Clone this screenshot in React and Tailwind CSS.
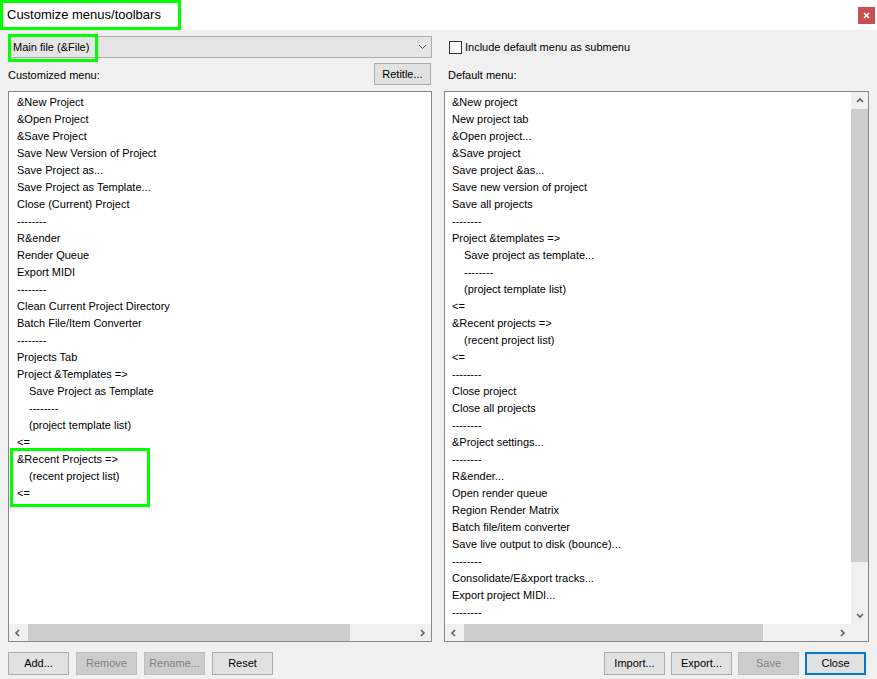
import { useState } from 'react'

const leftItems = [
  ['&New Project', 0],
  ['&Open Project', 0],
  ['&Save Project', 0],
  ['Save New Version of Project', 0],
  ['Save Project as...', 0],
  ['Save Project as Template...', 0],
  ['Close (Current) Project', 0],
  ['--------', 0],
  ['R&ender', 0],
  ['Render Queue', 0],
  ['Export MIDI', 0],
  ['--------', 0],
  ['Clean Current Project Directory', 0],
  ['Batch File/Item Converter', 0],
  ['--------', 0],
  ['Projects Tab', 0],
  ['Project &Templates =>', 0],
  ['Save Project as Template', 1],
  ['--------', 1],
  ['(project template list)', 1],
  ['<=', 0],
]

const recentItems = [
  ['&Recent Projects =>', 0],
  ['(recent project list)', 1],
  ['<=', 0],
]

const rightItems = [
  ['&New project', 0],
  ['New project tab', 0],
  ['&Open project...', 0],
  ['&Save project', 0],
  ['Save project &as...', 0],
  ['Save new version of project', 0],
  ['Save all projects', 0],
  ['--------', 0],
  ['Project &templates =>', 0],
  ['Save project as template...', 1],
  ['--------', 1],
  ['(project template list)', 1],
  ['<=', 0],
  ['&Recent projects =>', 0],
  ['(recent project list)', 1],
  ['<=', 0],
  ['--------', 0],
  ['Close project', 0],
  ['Close all projects', 0],
  ['--------', 0],
  ['&Project settings...', 0],
  ['--------', 0],
  ['R&ender...', 0],
  ['Open render queue', 0],
  ['Region Render Matrix', 0],
  ['Batch file/item converter', 0],
  ['Save live output to disk (bounce)...', 0],
  ['--------', 0],
  ['Consolidate/E&xport tracks...', 0],
  ['Export project MIDI...', 0],
  ['--------', 0],
]

const Row = ({ text, indent }) => (
  <div className={`h-[17px] leading-[17px] whitespace-nowrap ${indent ? 'pl-[12px]' : ''}`}>
    {text}
  </div>
)

const Chevron = ({ dir }) => {
  const paths = {
    left: 'M5 1 L2 4 L5 7',
    right: 'M2 1 L5 4 L2 7',
    up: 'M1 5 L4 2 L7 5',
    down: 'M1 2 L4 5 L7 2',
  }
  return (
    <svg width="8" height="8" viewBox="0 0 8 8">
      <path d={paths[dir]} fill="none" stroke="#606060" strokeWidth="1.6" />
    </svg>
  )
}

const HScroll = ({ thumbLeft, thumbWidth }) => (
  <div className="h-[17px] flex items-stretch bg-[#f0f0f0] shrink-0">
    <div className="w-[17px] flex items-center justify-center">
      <Chevron dir="left" />
    </div>
    <div className="flex-1 relative">
      <div
        className="absolute top-0 bottom-0 bg-[#cdcdcd]"
        style={{ left: thumbLeft, width: thumbWidth }}
      />
    </div>
    <div className="w-[17px] flex items-center justify-center">
      <Chevron dir="right" />
    </div>
  </div>
)

const Btn = ({ children, disabled, primary, className = '' }) => (
  <button
    className={`h-[23px] w-[61px] text-[11px] ${
      disabled
        ? 'bg-[#cccccc] border border-[#bfbfbf] text-[#838383]'
        : primary
        ? 'bg-[#e1e1e1] border-2 border-[#0078d7] text-black'
        : 'bg-[#e1e1e1] border border-[#adadad] text-black'
    } ${className}`}
  >
    {children}
  </button>
)

export default function App() {
  const [includeDefault, setIncludeDefault] = useState(false)

  return (
    <div
      className="w-[877px] h-[679px] bg-[#f0f0f0] flex flex-col text-[11px] text-black overflow-hidden"
      style={{ fontFamily: '"Liberation Sans", Arial, sans-serif' }}
    >
      {/* title bar */}
      <div className="h-[30px] bg-white flex items-center justify-between shrink-0">
        <div className="h-[30px] w-[181px] border-[3px] border-[#00ff00] flex items-center pl-[4px] text-[13px]">
          Customize menus/toolbars
        </div>
        <div className="w-[17px] h-[17px] bg-[#c75050] mr-[2px] flex items-center justify-center">
          <svg width="7" height="7" viewBox="0 0 7 7">
            <path d="M1 1 L6 6 M6 1 L1 6" stroke="white" strokeWidth="1.5" />
          </svg>
        </div>
      </div>

      <div className="flex-1 flex gap-[12px] px-[8px] pt-[6px]">
        {/* left column */}
        <div className="w-[424px] flex flex-col">
          <div className="h-[22px] relative bg-[#e5e5e5] border border-[#adadad] flex items-center pl-[4px] justify-between">
            <span className="relative z-10">Main file (&amp;File)</span>
            <div className="pr-[4px]">
              <svg width="9" height="6" viewBox="0 0 9 6">
                <path d="M1 1 L4.5 4.5 L8 1" fill="none" stroke="#555" strokeWidth="1" />
              </svg>
            </div>
            <div className="absolute left-[-1px] top-[-3px] w-[90px] h-[28px] border-[3px] border-[#00ff00]" />
          </div>
          <div className="h-[22px] mt-[5px] flex items-center justify-between">
            <span className="mt-[3px]">Customized menu:</span>
            <button className="h-[22px] w-[57px] bg-[#e1e1e1] border border-[#adadad] text-[11px] mr-[1px]">
              Retitle...
            </button>
          </div>
          <div className="mt-[6px] h-[551px] bg-white border border-[#828790] flex flex-col">
            <div className="flex-1 pt-[2px] pl-[8px] overflow-hidden">
              {leftItems.map(([t, i], k) => (
                <Row key={k} text={t} indent={i} />
              ))}
              <div className="border-[3px] border-[#00ff00] w-[140px] ml-[-7px] pl-[4px] pt-0 pb-[2px] mt-[-3px]">
                {recentItems.map(([t, i], k) => (
                  <Row key={k} text={t} indent={i} />
                ))}
              </div>
            </div>
            <HScroll thumbLeft={2} thumbWidth={322} />
          </div>
          <div className="mt-[10px] flex gap-[7px]">
            <Btn>Add...</Btn>
            <Btn disabled>Remove</Btn>
            <Btn disabled>Rename...</Btn>
            <Btn>Reset</Btn>
          </div>
        </div>

        {/* right column */}
        <div className="w-[425px] flex flex-col">
          <label className="h-[22px] flex items-center pl-[5px] gap-[3px]">
            <input
              type="checkbox"
              checked={includeDefault}
              onChange={(e) => setIncludeDefault(e.target.checked)}
              className="appearance-none w-[13px] h-[13px] border border-[#333] bg-white"
            />
            <span>Include default menu as submenu</span>
          </label>
          <div className="h-[22px] mt-[5px] flex items-center pl-[4px]">
            <span className="mt-[3px]">Default menu:</span>
          </div>
          <div className="mt-[6px] h-[551px] bg-white border border-[#828790] flex flex-col">
            <div className="flex-1 flex min-h-0">
              <div className="flex-1 pt-[2px] pl-[7px] overflow-hidden">
                {rightItems.map(([t, i], k) => (
                  <Row key={k} text={t} indent={i} />
                ))}
              </div>
              <div className="w-[17px] bg-[#f0f0f0] flex flex-col">
                <div className="h-[17px] flex items-center justify-center">
                  <Chevron dir="up" />
                </div>
                <div className="h-[453px] bg-[#cdcdcd]" />
                <div className="flex-1" />
                <div className="h-[17px] flex items-center justify-center">
                  <Chevron dir="down" />
                </div>
              </div>
            </div>
            <div className="flex">
              <div className="flex-1">
                <HScroll thumbLeft={2} thumbWidth={299} />
              </div>
              <div className="w-[17px] bg-[#f0f0f0]" />
            </div>
          </div>
          <div className="mt-[10px] flex justify-end gap-[6px] pr-[3px]">
            <Btn>Import...</Btn>
            <Btn>Export...</Btn>
            <Btn disabled>Save</Btn>
            <Btn primary>Close</Btn>
          </div>
        </div>
      </div>
    </div>
  )
}
